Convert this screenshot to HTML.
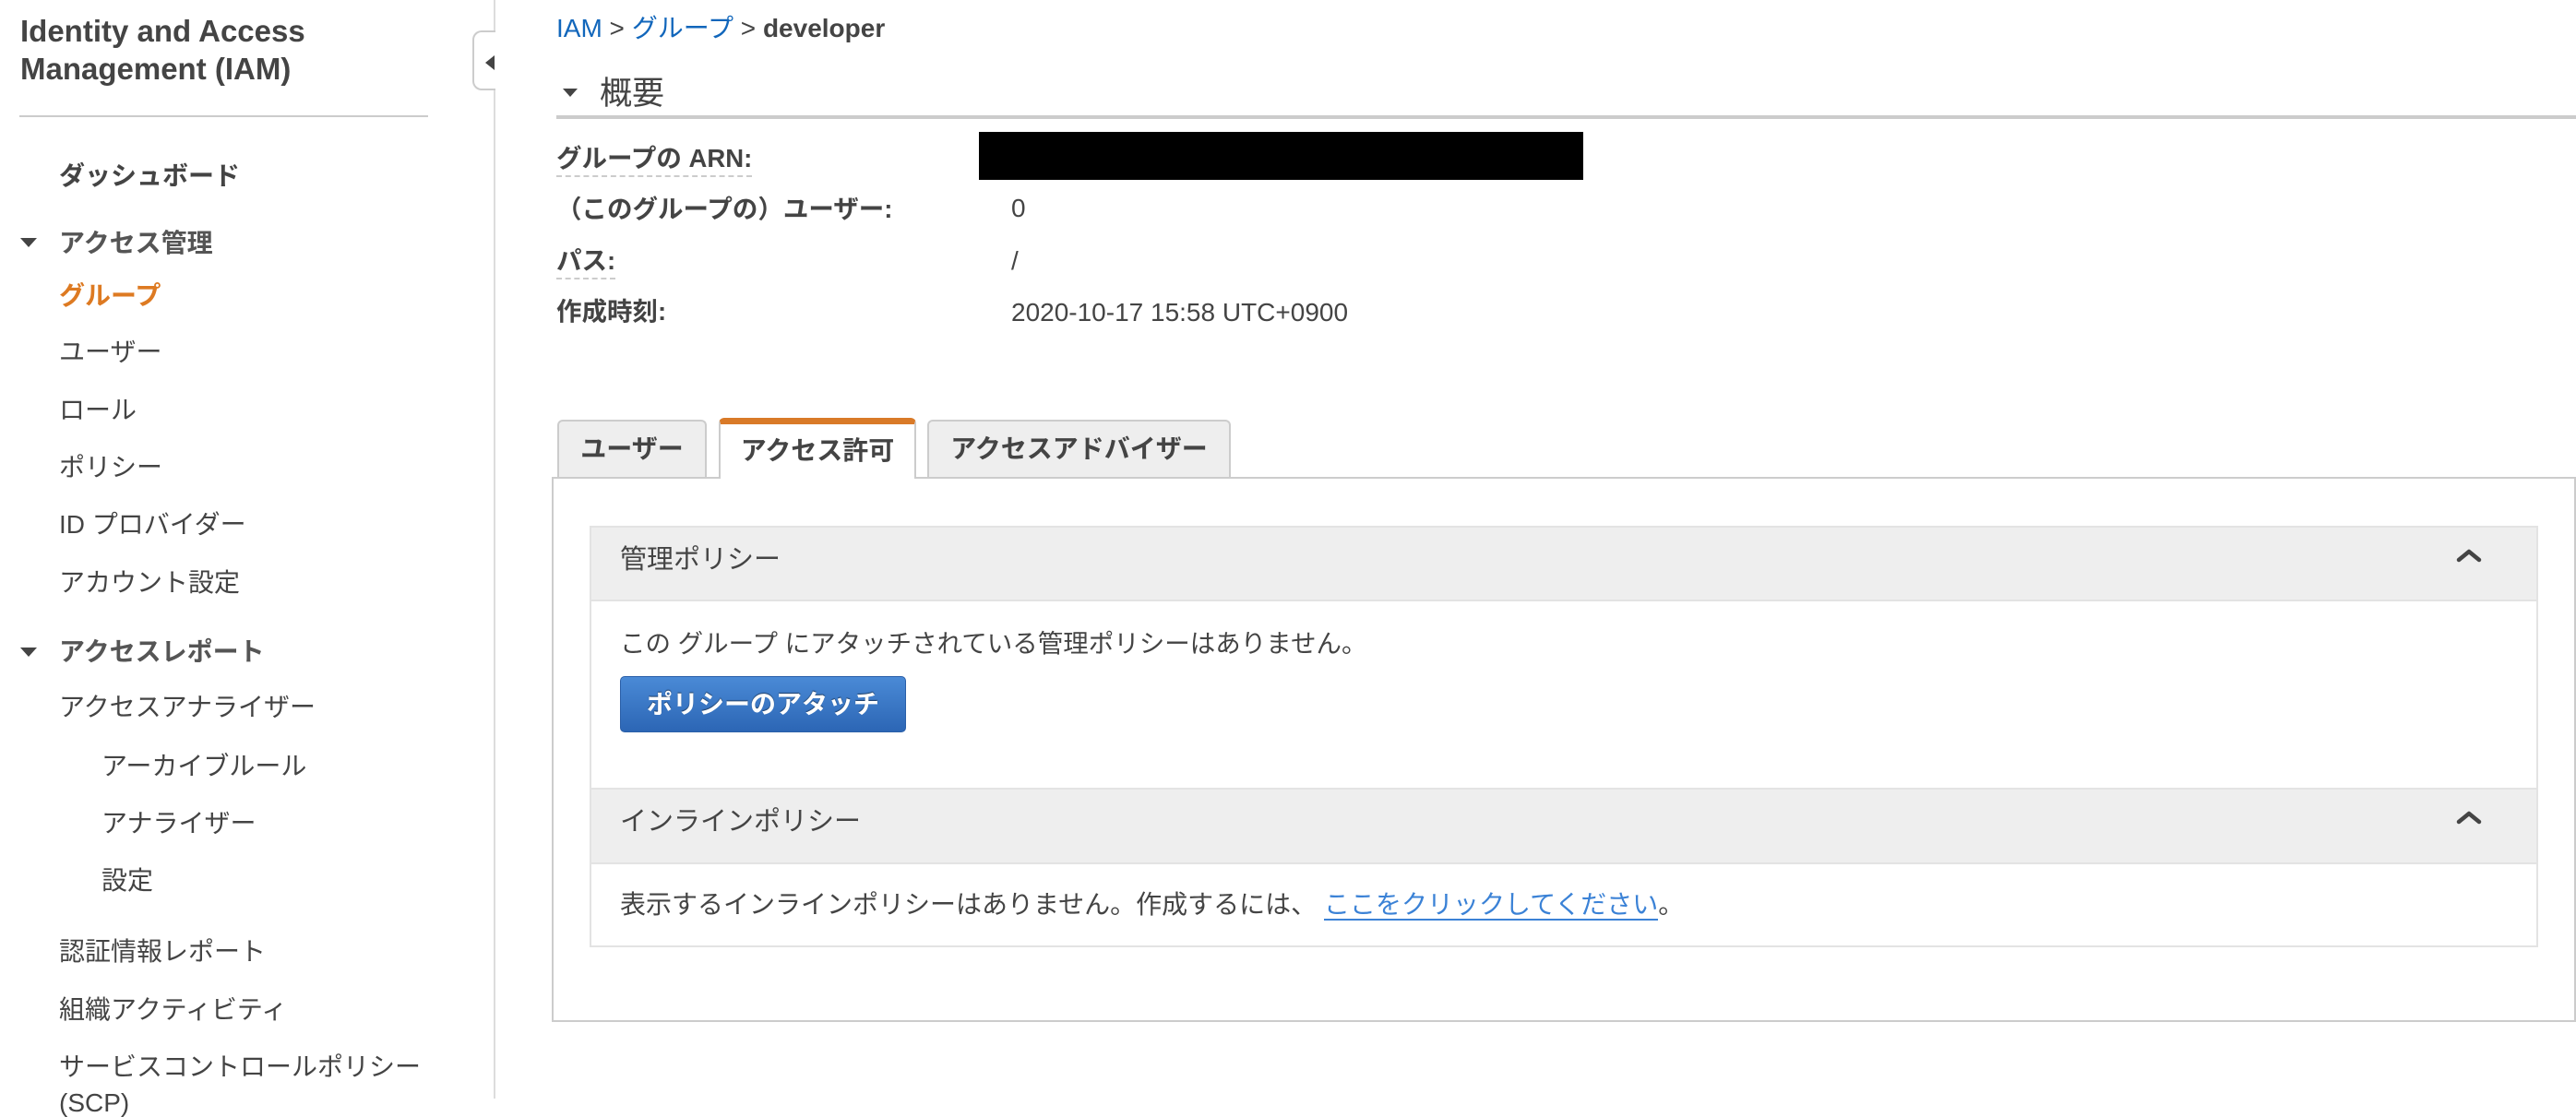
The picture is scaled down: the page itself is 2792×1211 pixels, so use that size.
<!DOCTYPE html>
<html><head><meta charset="utf-8"><style>
*{margin:0;padding:0;box-sizing:border-box}
body{width:2792px;height:1191px;background:#fff;position:relative;overflow:hidden;font-family:"Liberation Sans","Noto Sans CJK JP",sans-serif;color:#444}
.a{position:absolute;white-space:nowrap;line-height:1}
.sb{font-size:28px;color:#444}
.b{font-weight:bold}
.tri{position:absolute;width:0;height:0;border-left:9px solid transparent;border-right:9px solid transparent;border-top:10px solid #444}
.lbl{font-size:27.5px;font-weight:bold;color:#444}
.val{font-size:28px;color:#444}
.tab{position:absolute;top:455px;height:62px;background:#eee;border:2px solid #ccc;border-bottom:none;border-radius:6px 6px 0 0;font-size:28px;font-weight:bold;color:#444;text-align:center;line-height:60px}
.chev{position:absolute;width:28px;height:16px}
</style></head><body>

<div class="a b" style="left:22px;top:17px;font-size:33px;color:#444">Identity and Access</div>
<div class="a b" style="left:22px;top:58px;font-size:33px;color:#444">Management (IAM)</div>
<div style="position:absolute;left:21px;top:125px;width:443px;height:2px;background:#ccc"></div>
<div style="position:absolute;left:535px;top:0;width:2px;height:1191px;background:#ddd"></div>
<div style="position:absolute;left:512px;top:33px;width:25px;height:65px;background:#fff;border:2px solid #ccc;border-right:none;border-radius:10px 0 0 10px"></div>
<div style="position:absolute;left:526px;top:60px;width:0;height:0;border-top:8px solid transparent;border-bottom:8px solid transparent;border-right:10px solid #444"></div>

<div class="a sb b" style="left:64px;top:177px">ダッシュボード</div>
<div class="tri" style="left:22px;top:258px"></div>
<div class="a sb b" style="left:64px;top:250px;color:#555">アクセス管理</div>
<div class="a sb b" style="left:64px;top:307px;color:#dd7a22">グループ</div>
<div class="a sb" style="left:64px;top:368px">ユーザー</div>
<div class="a sb" style="left:64px;top:431px">ロール</div>
<div class="a sb" style="left:64px;top:493px">ポリシー</div>
<div class="a sb" style="left:64px;top:555px">ID プロバイダー</div>
<div class="a sb" style="left:64px;top:618px">アカウント設定</div>
<div class="tri" style="left:22px;top:702px"></div>
<div class="a sb b" style="left:64px;top:693px;color:#555">アクセスレポート</div>
<div class="a sb" style="left:64px;top:753px">アクセスアナライザー</div>
<div class="a sb" style="left:110px;top:817px">アーカイブルール</div>
<div class="a sb" style="left:110px;top:879px">アナライザー</div>
<div class="a sb" style="left:110px;top:941px">設定</div>
<div class="a sb" style="left:64px;top:1018px">認証情報レポート</div>
<div class="a sb" style="left:64px;top:1081px">組織アクティビティ</div>
<div class="a sb" style="left:64px;top:1143px">サービスコントロールポリシー</div>
<div class="a sb" style="left:64px;top:1182px">(SCP)</div>

<div class="a" style="left:603px;top:17px;font-size:28px;color:#444"><span style="color:#1166bb">IAM</span> &gt; <span style="color:#1166bb">グループ</span> &gt; <b>developer</b></div>
<div class="tri" style="left:610px;top:96px;border-left-width:8px;border-right-width:8px;border-top-width:9px"></div>
<div class="a" style="left:650px;top:84px;font-size:35px;color:#444">概要</div>
<div style="position:absolute;left:603px;top:125px;width:2189px;height:4px;background:#ccc"></div>

<div class="a lbl" style="left:603px;top:158px;border-bottom:2px dashed #ccc;padding-bottom:4px">グループの ARN:</div>
<div style="position:absolute;left:1061px;top:143px;width:655px;height:52px;background:#000"></div>
<div class="a lbl" style="left:603px;top:213px">（このグループの）ユーザー:</div>
<div class="a val" style="left:1096px;top:212px">0</div>
<div class="a lbl" style="left:603px;top:269px;border-bottom:2px dashed #ccc;padding-bottom:4px">パス:</div>
<div class="a val" style="left:1096px;top:269px">/</div>
<div class="a lbl" style="left:603px;top:324px">作成時刻:</div>
<div class="a val" style="left:1096px;top:325px">2020-10-17 15:58 UTC+0900</div>

<div style="position:absolute;left:598px;top:517px;width:2194px;height:591px;border:2px solid #ccc;background:#fff"></div>
<div class="tab" style="left:604px;width:162px">ユーザー</div>
<div class="tab" style="left:779px;width:214px;top:453px;height:66px;background:#fff;border-top:7px solid #d97a28;line-height:58px;z-index:2">アクセス許可</div>
<div class="tab" style="left:1005px;width:329px">アクセスアドバイザー</div>

<div style="position:absolute;left:639px;top:570px;width:2112px;height:457px;border:2px solid #e3e3e3;background:#fff"></div>
<div style="position:absolute;left:641px;top:572px;width:2108px;height:80px;background:#eee;border-bottom:2px solid #e3e3e3"></div>
<div class="a" style="left:672px;top:593px;font-size:29px;color:#444">管理ポリシー</div>
<svg class="chev" style="left:2662px;top:594px" viewBox="0 0 28 16"><path d="M3 13 L14 4 L25 13" fill="none" stroke="#444" stroke-width="4.5" stroke-linecap="round" stroke-linejoin="round"/></svg>
<div class="a" style="left:672px;top:684px;font-size:27.5px;color:#444">この グループ にアタッチされている管理ポリシーはありません。</div>
<div style="position:absolute;left:672px;top:733px;width:310px;height:61px;border-radius:5px;background:linear-gradient(#4a8ad6,#2c66b5);border:1px solid #2a5fa8;color:#fff;font-size:28px;font-weight:bold;text-align:center;line-height:59px;text-shadow:0 -1px 1px rgba(0,0,0,.5)">ポリシーのアタッチ</div>
<div style="position:absolute;left:641px;top:854px;width:2108px;height:83px;background:#eee;border-top:2px solid #e3e3e3;border-bottom:2px solid #e3e3e3"></div>
<div class="a" style="left:672px;top:877px;font-size:29px;color:#444">インラインポリシー</div>
<svg class="chev" style="left:2662px;top:878px" viewBox="0 0 28 16"><path d="M3 13 L14 4 L25 13" fill="none" stroke="#444" stroke-width="4.5" stroke-linecap="round" stroke-linejoin="round"/></svg>
<div class="a" style="left:672px;top:967px;font-size:28px;color:#444">表示するインラインポリシーはありません。作成するには、 <span style="color:#3b82d6;border-bottom:2px solid #3b82d6">ここをクリックしてください</span>。</div>
</body></html>
